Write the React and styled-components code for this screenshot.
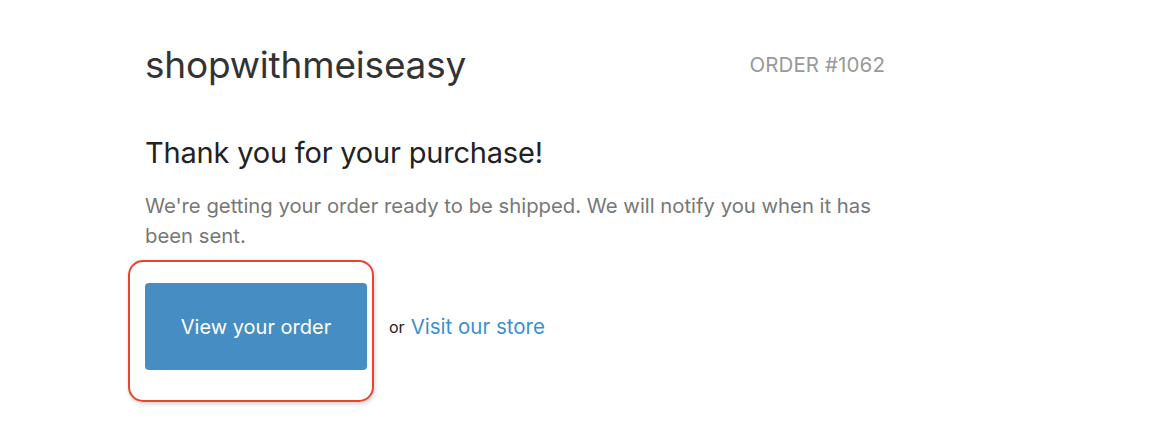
import React from "react";
import styled, { createGlobalStyle } from "styled-components";

const GlobalStyle = createGlobalStyle`
  html, body {
    margin: 0;
    padding: 0;
    background: #ffffff;
  }
  body {
    font-family: Inter, "Noto Sans", "Liberation Sans", sans-serif;
    -webkit-font-smoothing: antialiased;
  }
`;

const Page = styled.div`
  width: 1160px;
  height: 432px;
  overflow: hidden;
  padding: 41px 0 0 145px;
  box-sizing: border-box;
`;

const Container = styled.div`
  width: 740px;
`;

const Header = styled.div`
  display: flex;
  align-items: center;
  justify-content: space-between;
`;

const Logo = styled.h1`
  margin: 0;
  font-size: 37px;
  font-weight: 400;
  line-height: 48px;
  color: #333333;
  letter-spacing: -0.2px;
`;

const OrderNumber = styled.span`
  font-size: 20.5px;
  color: #999999;
  letter-spacing: 0.1px;
  margin-top: -2px;
`;

const Title = styled.h2`
  margin: 44px 0 0;
  font-size: 29px;
  font-weight: 400;
  line-height: 40px;
  color: #222222;
  letter-spacing: -0.2px;
`;

const Message = styled.p`
  margin: 18px 0 0;
  font-size: 20.3px;
  line-height: 30px;
  color: #777777;
`;

const Actions = styled.div`
  display: flex;
  align-items: center;
  margin-top: 32px;
`;

const ButtonCell = styled.div`
  position: relative;
`;

const Highlight = styled.div`
  position: absolute;
  left: -17px;
  top: -23px;
  right: -7px;
  bottom: -32px;
  border: 2px solid #e8432e;
  border-radius: 15px;
  box-shadow: 1px 2px 4px rgba(0, 0, 0, 0.18);
  pointer-events: none;
`;

const Button = styled.a`
  display: flex;
  align-items: center;
  justify-content: center;
  width: 222px;
  height: 87px;
  background: #468dc3;
  border-radius: 4px;
  color: #ffffff;
  font-size: 20px;
  text-decoration: none;
`;

const Alt = styled.span`
  margin-left: 22px;
  font-size: 16px;
  color: #222222;
`;

const Link = styled.a`
  margin-left: 6px;
  font-size: 20.5px;
  color: #3b8fcd;
  text-decoration: none;
`;

export default function App() {
  return (
    <>
      <GlobalStyle />
      <Page>
        <Container>
          <Header>
            <Logo>shopwithmeiseasy</Logo>
            <OrderNumber>ORDER #1062</OrderNumber>
          </Header>
          <Title>Thank you for your purchase!</Title>
          <Message>
            We're getting your order ready to be shipped. We will notify you
            when it has been sent.
          </Message>
          <Actions>
            <ButtonCell>
              <Highlight />
              <Button href="#">View your order</Button>
            </ButtonCell>
            <Alt>or</Alt>
            <Link href="#">Visit our store</Link>
          </Actions>
        </Container>
      </Page>
    </>
  );
}
